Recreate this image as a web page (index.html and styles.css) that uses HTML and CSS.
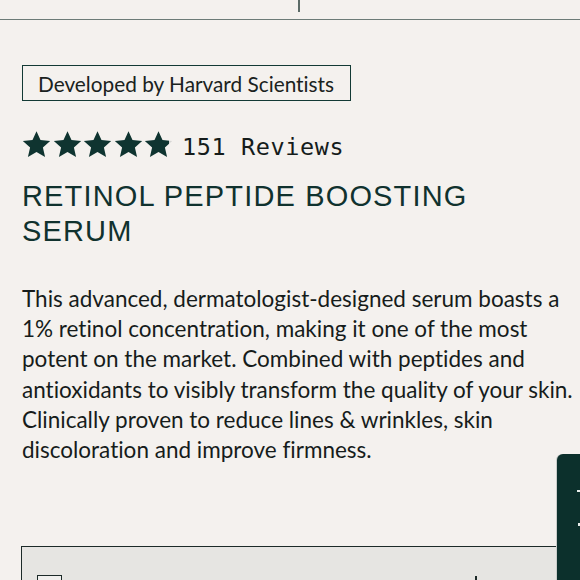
FILE: index.html
```html
<!DOCTYPE html>
<html lang="en">
<head>
<meta charset="utf-8">
<title>Retinol Peptide Boosting Serum</title>
<link rel="stylesheet" href="styles.css">
</head>
<body>
<header class="topbar">
  <span class="topbar-divider"></span>
</header>
<main class="product">
  <div class="badge">Developed by Harvard Scientists</div>
  <div class="rating">
    <div class="stars">
      <svg class="star" viewBox="0 0 24 24"><path d="M12 1l3.3 7.3 8 .8-6 5.4 1.8 7.9L12 18.3l-7.1 4.1 1.8-7.9-6-5.4 8-.8z"/></svg>
      <svg class="star" viewBox="0 0 24 24"><path d="M12 1l3.3 7.3 8 .8-6 5.4 1.8 7.9L12 18.3l-7.1 4.1 1.8-7.9-6-5.4 8-.8z"/></svg>
      <svg class="star" viewBox="0 0 24 24"><path d="M12 1l3.3 7.3 8 .8-6 5.4 1.8 7.9L12 18.3l-7.1 4.1 1.8-7.9-6-5.4 8-.8z"/></svg>
      <svg class="star" viewBox="0 0 24 24"><path d="M12 1l3.3 7.3 8 .8-6 5.4 1.8 7.9L12 18.3l-7.1 4.1 1.8-7.9-6-5.4 8-.8z"/></svg>
      <svg class="star" viewBox="0 0 24 24">
        <defs><linearGradient id="partial"><stop offset="90%" stop-color="#0f3430"/><stop offset="90%" stop-color="#d6d6d4"/></linearGradient></defs>
        <path fill="url(#partial)" d="M12 1l3.3 7.3 8 .8-6 5.4 1.8 7.9L12 18.3l-7.1 4.1 1.8-7.9-6-5.4 8-.8z"/>
      </svg>
    </div>
    <span class="reviews">151 Reviews</span>
  </div>
  <h1 class="title">RETINOL PEPTIDE BOOSTING<br>SERUM</h1>
  <p class="desc">This advanced, dermatologist-designed serum boasts a<br>1% retinol concentration, making it one of the most<br>potent on the market. Combined with peptides and<br>antioxidants to visibly transform the quality of your skin.<br>Clinically proven to reduce lines &amp; wrinkles, skin<br>discoloration and improve firmness.</p>
  <div class="options">
    <span class="checkbox"></span>
    <span class="option-mark"></span>
  </div>
</main>
<aside class="side-tab">
  <span class="tab-mark tab-mark-1"></span>
  <span class="tab-mark tab-mark-2"></span>
</aside>
</body>
</html>
```
FILE: styles.css
```css
html, body {
  margin: 0;
  padding: 0;
  background: #f4f1ee;
  overflow: hidden;
}
body {
  height: 580px;
  color: #16201e;
  font-family: Lato, "Open Sans", sans-serif;
  font-variant-ligatures: no-common-ligatures;
}
.topbar {
  height: 19px;
  border-bottom: 1.5px solid #6c7b77;
  padding-left: 298px;
}
.topbar-divider {
  display: block;
  width: 2px;
  height: 12px;
  background: #5c6b67;
}
.product {
  padding: 45px 0 0 22px;
}
.badge {
  display: inline-block;
  border: 1.5px solid #133a35;
  padding: 0 16px 0 15px;
  height: 34px;
  line-height: 35px;
  font-size: 20.8px;
  color: #1a2220;
}
.rating {
  display: flex;
  align-items: center;
  margin-top: 28px;
  height: 30px;
}
.stars {
  display: flex;
  gap: 1.5px;
}
.star {
  width: 29px;
  height: 29px;
  fill: #0f3430;
}
.reviews {
  margin: 6px 0 0 9px;
  font-family: "DejaVu Sans Mono", "Liberation Mono", monospace;
  font-size: 23.5px;
  letter-spacing: 0.6px;
  color: #151c1b;
}
.title {
  margin: 20px 0 0;
  font-family: "Liberation Sans", Arial, sans-serif;
  font-weight: 400;
  font-size: 29px;
  line-height: 35px;
  letter-spacing: 1.15px;
  color: #10322e;
}
.desc {
  margin: 35px 0 0;
  font-size: 22.5px;
  line-height: 30.2px;
  white-space: nowrap;
  color: #161c1b;
}
.options {
  position: relative;
  margin-top: 81px;
  margin-left: -1px;
  height: 40px;
  border: 1.5px solid #1c2a28;
  border-right: none;
  background: #e6e5e2;
}
.checkbox {
  display: block;
  margin: 28px 0 0 15px;
  width: 23px;
  height: 20px;
  border: 1.5px solid #1c2a28;
  background: #f0efed;
}
.option-mark {
  position: absolute;
  left: 453px;
  top: 29px;
  width: 1.5px;
  height: 6px;
  background: #1c2a28;
}
.side-tab {
  position: absolute;
  left: 557px;
  top: 454px;
  width: 30px;
  height: 140px;
  background: #0c302c;
  border-top-left-radius: 6px;
  box-shadow: -1px 0 0 #c9ccca;
}
.tab-mark {
  position: absolute;
  background: #e8ecea;
}
.tab-mark-1 {
  left: 20px;
  top: 36px;
  width: 3px;
  height: 2px;
}
.tab-mark-2 {
  left: 21px;
  top: 69px;
  width: 2px;
  height: 3px;
}
```
